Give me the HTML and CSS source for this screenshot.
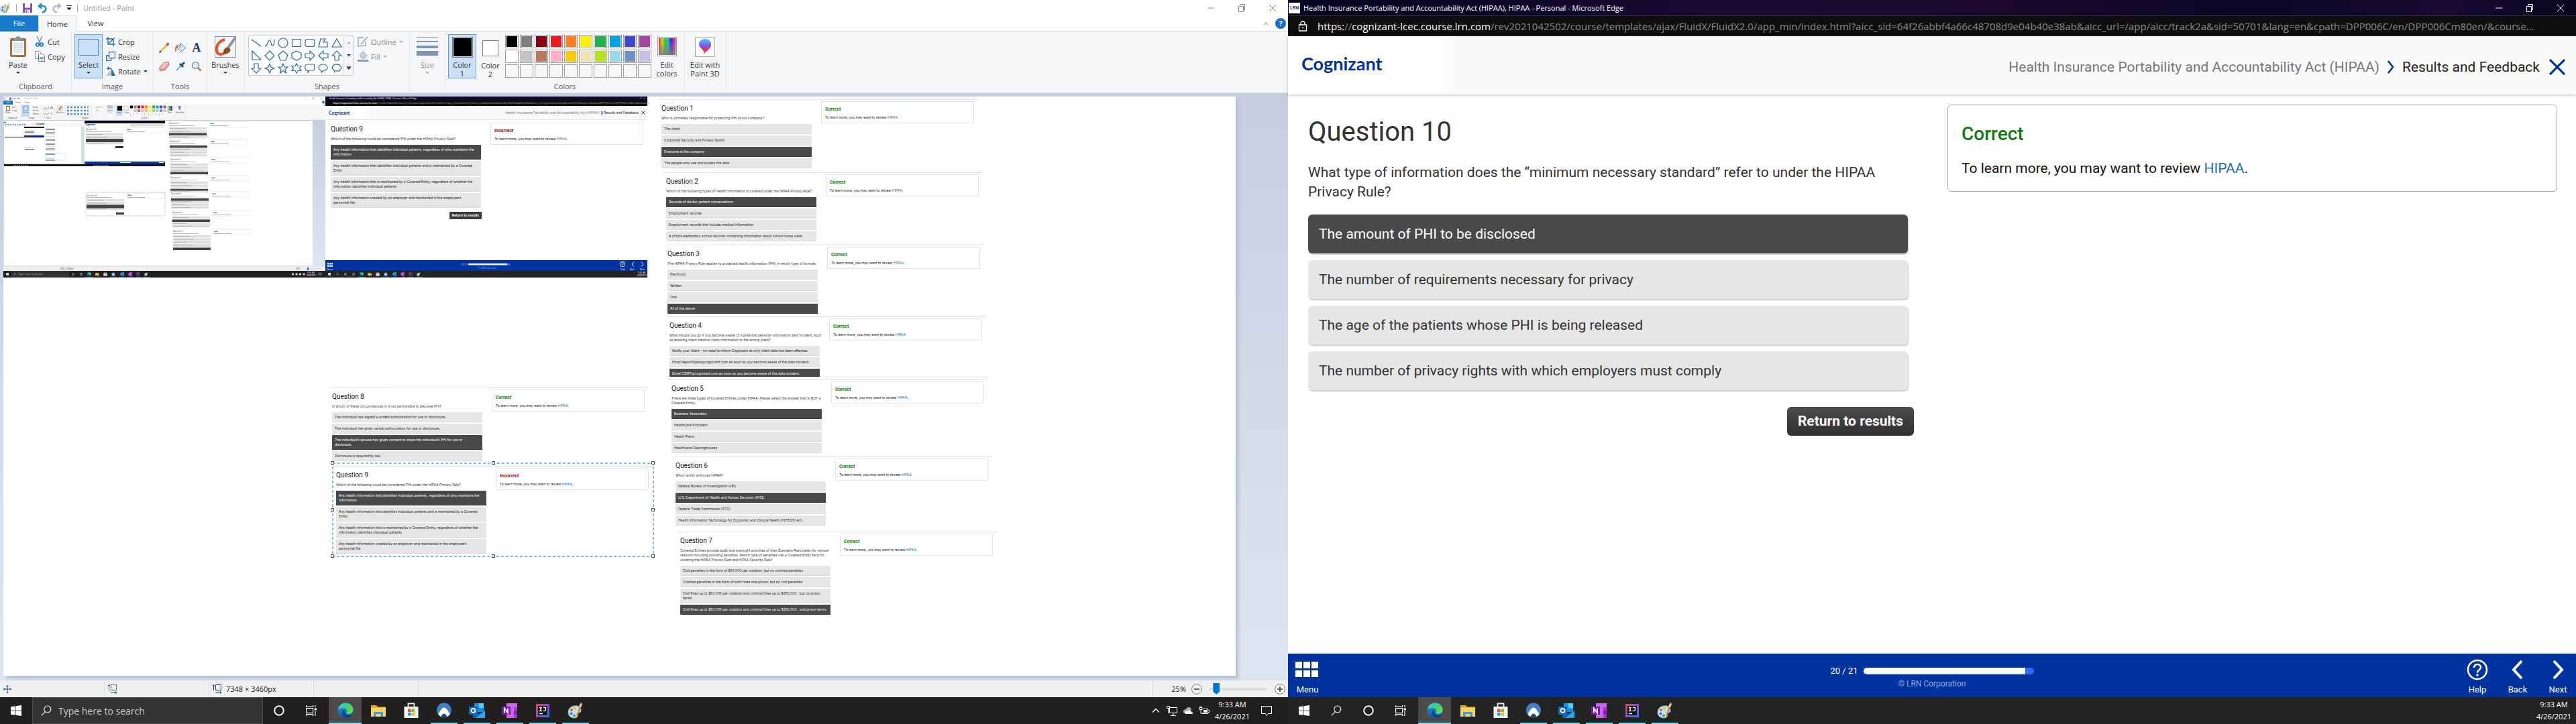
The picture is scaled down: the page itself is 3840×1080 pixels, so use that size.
FILE: index.html
```html
<!DOCTYPE html>
<html lang="en">
<head>
<meta charset="utf-8">
<meta name="viewport" content="width=device-width, initial-scale=1">
<title>Untitled - Paint</title>
<link rel="stylesheet" href="styles.css">
</head>
<body>
<svg class="defs" aria-hidden="true">
  <defs>
    <linearGradient id="edgeA" x1="0" y1="0" x2="1" y2="1"><stop offset="0" stop-color="#36c9f0"/><stop offset=".5" stop-color="#3fd06f"/><stop offset="1" stop-color="#7be04a"/></linearGradient>
    <linearGradient id="edgeB" x1="0" y1="0" x2="0" y2="1"><stop offset="0" stop-color="#1fa8e0"/><stop offset="1" stop-color="#0f4fa0"/></linearGradient>
    <linearGradient id="rainbow"><stop offset="0" stop-color="#e02020"/><stop offset=".2" stop-color="#e8e020"/><stop offset=".4" stop-color="#20d020"/><stop offset=".55" stop-color="#20c8e0"/><stop offset=".72" stop-color="#2020e0"/><stop offset=".88" stop-color="#d020d0"/><stop offset="1" stop-color="#e02060"/></linearGradient>
    <linearGradient id="fadeGray" x1="0" y1="0" x2="0" y2="1"><stop offset="0" stop-color="#808080" stop-opacity="0"/><stop offset="1" stop-color="#808080" stop-opacity=".9"/></linearGradient>
    <linearGradient id="pin" x1="0" y1="0" x2="0" y2="1"><stop offset="0" stop-color="#35d0f0"/><stop offset=".4" stop-color="#7a5cf0"/><stop offset=".7" stop-color="#e0305c"/><stop offset="1" stop-color="#f8b020"/></linearGradient>
    <linearGradient id="ws" x1="0" y1="0" x2="0" y2="1"><stop offset="0" stop-color="#c6cfe0"/><stop offset="1" stop-color="#dce6f3"/></linearGradient>
    <linearGradient id="ijg" x1="0" y1="0" x2="1" y2="1"><stop offset="0" stop-color="#e83a5f"/><stop offset=".5" stop-color="#8a4fd0"/><stop offset="1" stop-color="#1a7ff0"/></linearGradient>
  </defs>
  <symbol id="i-win" viewBox="0 0 16 16"><path fill="#fff" d="M0 2.3 6.6 1.4v6.3H0zM7.4 1.3 16 0v7.7H7.4zM0 8.5h6.6v6.2L0 13.8zM7.4 8.5H16V16l-8.6-1.2z"/></symbol>
  <symbol id="i-search" viewBox="0 0 16 16"><g fill="none" stroke="#e8e8e8" stroke-width="1.2"><circle cx="9.8" cy="6" r="5"/><path d="M6.2 9.8 .8 15.4"/></g></symbol>
  <symbol id="i-ring" viewBox="0 0 16 16"><circle cx="8" cy="8" r="6.8" fill="none" stroke="#f4f4f4" stroke-width="2"/></symbol>
  <symbol id="i-task" viewBox="0 0 16 16"><g fill="none" stroke="#f0f0f0" stroke-width="1.2"><path d="M.6 4.6h10v7H.6zM.6 0v2.4h10V0M.6 16v-2.400h10V16M14 0v3M14 9v7"/></g><path fill="#f0f0f0" d="M12.600 4.500H16v3h-3.400z"/></symbol>
  <symbol id="i-edge" viewBox="0 0 24 24"><circle cx="12" cy="12" r="11.500" fill="url(#edgeB)"/><path fill="url(#edgeA)" d="M1 10C2 4 7 .5 12 .5c7 0 11.500 5 11.500 10 0 4-3 6.500-7 6.500-3 0-4-1-3-2.200 1.400-1.800 1-5.800-3.500-6.300C6 8 2 9 1 10z"/><path fill="#0c3f86" d="M9 11c-3 4-1 10.500 5.500 11.200 3 .2 6-1.700 7.500-4.200-5 2.500-11.500.5-11.500-4 0-1.500.5-2.500-1.500-3z"/></symbol>
  <symbol id="i-folder" viewBox="0 0 24 24"><path fill="#e2a41c" d="M1 4h8l2 2.500H23V10H1z"/><path fill="#ffd45e" d="M1 7.500h22V21H1z"/><path fill="#3c9be0" d="M5 14h14v7h-3.500v-4h-7v4H5z"/></symbol>
  <symbol id="i-store" viewBox="0 0 24 24"><path fill="none" stroke="#e8e8e8" stroke-width="1.800" d="M7.500 6V1.500h9V6"/><path fill="#f4f4f4" d="M1.500 6h21v17h-21z"/><path fill="#e8502a" d="M7 9.500h4.500V14H7z"/><path fill="#7fb92a" d="M12.500 9.500H17V14h-4.500z"/><path fill="#1a9be8" d="M7 15h4.500v4.500H7z"/><path fill="#fbbc12" d="M12.500 15H17v4.500h-4.500z"/></symbol>
  <symbol id="i-nord" viewBox="0 0 24 24"><circle cx="12" cy="11.500" r="11" fill="#3f7fc8"/><path fill="#fff" d="M3.500 17.500C5 14 8.500 7.500 12 7.500s7 6.500 8.500 10L17 21c-2-3-3.500-4.500-5-4.500S9 18 7 21z"/><path fill="#22406f" d="m8 21 2.500-4.500 1.500 1.500 1.500-1.500L16 21c-2 1.800-6 1.800-8 0z"/></symbol>
  <symbol id="i-outlook" viewBox="0 0 24 24"><path fill="#1a8fe0" d="M8 1h14v13H8z"/><path fill="#50d0f8" d="M15 1h7v7h-7z"/><path fill="#1060b8" d="m6 12 9 5 9-5v11H6z"/><path fill="#2aa8ec" d="m24 12-14 11H22.500L24 22z"/><path fill="#0f6cc4" d="M0 6h13v12H0z"/><circle cx="6.500" cy="12" r="3" fill="none" stroke="#fff" stroke-width="1.800"/></symbol>
  <symbol id="i-onenote" viewBox="0 0 24 24"><path fill="#ca64ea" d="M7 1h16v22H7z"/><path fill="#a33ac8" d="M18 7h5v16h-5z"/><path fill="#8a22b0" d="M18 12h5v6h-5z"/><path fill="#7719aa" d="M0 6h13v12H0z"/><path fill="none" stroke="#fff" stroke-width="1.800" d="M4 15.500V8.500l5 7V8.500"/></symbol>
  <symbol id="i-ij" viewBox="0 0 24 24"><path fill="url(#ijg)" d="M2 2h20v20H2z"/><path fill="#111" d="M5 5h14v14H5z"/><path fill="none" stroke="#fff" stroke-width="1.400" d="M7 7.500h4M9 7.500v5M7 12.500h4M13 7.500h3.500v3.500c0 2-3 2-3.500.8M7 16.500h5"/></symbol>
  <symbol id="i-paint" viewBox="0 0 24 24"><path fill="#bfe0ee" stroke="#7fb2cc" d="M10 5c6-1 10 2 10 7 0 3-2 3-4 3s-2 2-1 4-1 4-5 4C4 23 1 19 1 14.500 1 9 5 5.800 10 5z"/><circle cx="6" cy="11" r="2" fill="#e85030"/><circle cx="11" cy="8.500" r="2" fill="#f0b828"/><circle cx="5.500" cy="16.500" r="2" fill="#3a70d8"/><circle cx="10" cy="19.500" r="2" fill="#40b050"/><path fill="#d8802a" d="m20 7-5 14-2 2 .5-3L17 7z"/><path fill="#e8c89a" d="M17 7c0-3 2-6 4-7 1 2 1 5-1 7z"/></symbol>
  <symbol id="i-move" viewBox="0 0 12 12"><path fill="none" stroke="#1f3f6f" d="M6 0v12M0 6h12M4.500 2 6 .5 7.500 2M4.500 10 6 11.500 7.500 10M2 4.500.5 6 2 7.500M10 4.500 11.500 6 10 7.500"/></symbol>
  <g id="mq">
    <path d="M1 .8h119" stroke="#e4e4e4" stroke-width=".5"/>
    <path d="M1 7.500h38" stroke="#999" stroke-width=".7"/>
    <path d="M1 11.600h56M1 15.900h56M1 20.200h56M1 24.500h56" stroke="#dedede" stroke-width="3.500"/>
    <path d="M2 11.600h24M2 15.900h30M2 20.200h20M2 24.500h28" stroke="#888" stroke-width=".5"/>
    <rect x="60.500" y="1.500" width="57" height="8" fill="#fff" stroke="#e4e4e4" stroke-width=".5"/>
    <path d="M62 4.200h6" stroke="#3c9a3c" stroke-width="1.200"/><path d="M62 7.600h22" stroke="#777" stroke-width=".6"/><path d="M84 7.600h4.500" stroke="#3a8ac0" stroke-width=".7"/>
  </g>
  <g id="apps">
    <use href="#i-edge" x="7" y="0" width="6" height="6"/><use href="#i-folder" x="19" width="6" height="6"/><use href="#i-store" x="31" width="6" height="6"/><use href="#i-nord" x="43" width="6" height="6"/><use href="#i-outlook" x="56" width="6" height="6"/><use href="#i-onenote" x="68" width="6" height="6"/><use href="#i-ij" x="80" width="6" height="6"/><use href="#i-paint" x="92" width="6" height="6"/>
    <path d="M4 7.700h12M41 7.700h10M54 7.700h10M66 7.700h10M78 7.700h10M90 7.700h10" stroke="#76d9f5" stroke-width=".6"/>
  </g>
</svg>

<div class="screens">
<!-- Left monitor: Paint -->
<section class="screen paint">
  <header class="p-title">
    <svg class="i16" viewBox="0 0 24 24"><use href="#i-paint"/></svg>
    <span class="bar"></span>
    <button class="qa" aria-label="Save"><svg class="i16" viewBox="0 0 16 16"><path fill="#7f5aa8" d="M1 1h14v14H1z"/><path fill="#fff" d="M4 1h8v6.500H4z"/><path fill="#e8e0f0" d="M4 10.500h8V15H4z"/><path fill="#7f5aa8" d="M5.500 11.500h2V15h-2z"/></svg></button>
    <button class="qa" aria-label="Undo"><svg class="i16" viewBox="0 0 16 16"><path fill="none" stroke="#1f8fe0" stroke-width="2.600" d="M4 5h5c6 0 6 8-1 9.500"/><path fill="#1f8fe0" d="M7 0v10L.8 5z"/></svg></button>
    <button class="qa" aria-label="Redo"><svg class="i16" viewBox="0 0 16 16"><path fill="none" stroke="#b4bccb" stroke-width="2.600" d="M12 5H7c-6 0-6 8 1 9.500"/><path fill="#b4bccb" d="M9 0v10l6.200-5z"/></svg></button>
    <svg class="i8" viewBox="0 0 8 8"><path d="M0 .5h8" stroke="#333"/><path d="M.5 3.500h7L4 7z"/></svg>
    <span class="bar"></span>
    <span class="name">Untitled - Paint</span>
    <span class="ctl"><button aria-label="Minimize"><svg class="i12" viewBox="0 0 12 12"><path d="M1 6h10" stroke="#888"/></svg></button><button aria-label="Restore"><svg class="i12" viewBox="0 0 12 12"><path fill="none" stroke="#888" d="M1.500 3.500h7v8h-7zM3.500 3V.5h7v8H9"/></svg></button><button aria-label="Close"><svg class="i12" viewBox="0 0 12 12"><path d="m1 1 10 10M11 1 1 11" stroke="#888"/></svg></button></span>
  </header>
  <nav class="p-tabs">
    <button class="file">File</button><button class="on">Home</button><button>View</button>
    <span class="tabs-end"><svg class="i8" viewBox="0 0 8 8"><path fill="none" stroke="#888" d="M1 6.500 4 2.500l3 4"/></svg><button class="help" aria-label="Help">?</button></span>
  </nav>
  <div class="ribbon">
    <section class="grp g-clip"><div class="row">
      <button class="big">
        <svg class="i32" viewBox="0 0 32 32"><rect x="4" y="3" width="24" height="28" rx="2" fill="#a9713d"/><path fill="#f6f8fa" d="M7 7h18v21H7z"/><path stroke="#9fb3c4" d="M9 11.500h14M9 14.500h14M9 17.500h14M9 20.500h14M9 23.500h14"/><path fill="#8b9299" d="M10 3c3 0 3-3 6-3s3 3 6 3v4H10z"/></svg>
        <span>Paste</span><i class="dd"></i></button>
      <div class="stack two"><button><svg class="i16" viewBox="0 0 16 16"><path d="m4 0 5 10M12 0 7 10" stroke="#8a97a5" stroke-width="1.600"/><g fill="none" stroke="#1f7fd0" stroke-width="1.800"><circle cx="5" cy="12.500" r="2.300"/><circle cx="11" cy="12.500" r="2.300"/></g></svg>Cut</button><button><svg class="i16" viewBox="0 0 16 16"><path fill="#fff" stroke="#8a95a0" d="M1.500.5h6l2 2v9h-8z"/><path fill="#fff" stroke="#6a7580" d="M6.500 4.500h6l3 3v8h-9z"/><path stroke="#4a90d0" d="M8 9.500h6M8 11.500h6M8 13.500h6"/></svg>Copy</button></div>
    </div><h2>Clipboard</h2></section>
    <section class="grp g-image"><div class="row">
      <button class="big sel"><svg class="i32" viewBox="0 0 32 32"><rect x="1.500" y="4.500" width="29" height="24" fill="none" stroke="#1f5f9f" stroke-dasharray="2 1"/></svg><span>Select</span><i class="dd"></i></button>
      <div class="stack"><button><svg class="i14" viewBox="0 0 14 14"><path fill="none" stroke="#1f6fb0" stroke-width="1.300" d="M3 0v11h11M0 3h11v11M3 11 13 1"/></svg>Crop</button><button><svg class="i14" viewBox="0 0 14 14"><path fill="none" stroke="#1f6fb0" stroke-width="1.300" d="M4.500.7h9v9h-9zM4.500 6H.7v7.300h7V10"/></svg>Resize</button><button><svg class="i14" viewBox="0 0 14 14"><path fill="#bcc4cc" d="M7 5v9H0z"/><path fill="#1f6fb0" d="M8 2v12h6zM1 3l3-3v2h3v2H4v2z"/></svg>Rotate<i class="dd"></i></button></div>
    </div><h2>Image</h2></section>
    <section class="grp g-tools"><div class="tools">
      <button aria-label="Pencil"><svg class="i16" viewBox="0 0 16 16"><path d="M2 14 12 4" stroke="#e8c050" stroke-width="3"/><path d="m11.500 4.500 3-3" stroke="#c85048" stroke-width="3.200"/><path fill="#444" d="m0 16 1.500-4 2.500 2.500z"/></svg></button>
      <button aria-label="Fill with color"><svg class="i16" viewBox="0 0 16 16"><path fill="#e86a30" d="M0 13c0-6 1-9 4-9v3c-2 1-2 4-2 7z"/><path fill="#cfe4f4" stroke="#5a8ab0" d="m9 2 6.500 6.500-6 6-6.500-6.500z"/><path d="M8 1v7" stroke="#777"/></svg></button>
      <button class="letter" aria-label="Text">A</button>
      <button aria-label="Eraser"><svg class="i16" viewBox="0 0 16 16"><path fill="#e89a96" stroke="#b8605c" d="m7 2.500 7-1 1 4-6 8-7 1-1.500-4z"/><path fill="#f6c4c0" d="m7 3 7-1-5.500 7.500L1.500 11z"/></svg></button>
      <button aria-label="Color picker"><svg class="i16" viewBox="0 0 16 16"><path d="m2 14 7-7" stroke="#8ab4d8" stroke-width="2.400"/><path d="m7 4 5 5M10 6l4-4" stroke="#1f4f80" stroke-width="3"/></svg></button>
      <button aria-label="Magnifier"><svg class="i16" viewBox="0 0 16 16"><circle cx="6.500" cy="6.500" r="5" fill="#dcebf6" stroke="#8a97a5" stroke-width="1.500"/><path d="m10.500 10.500 4 4" stroke="#a97a4a" stroke-width="2.600"/></svg></button>
    </div><h2>Tools</h2></section>
    <section class="grp g-brush"><div class="row">
      <button class="big"><svg class="i32" viewBox="0 0 32 32"><path fill="#f2f6f8" stroke="#8a8f94" d="M.5.5h31v31H.5z"/><path fill="none" stroke="#e8582a" stroke-width="4" d="M15 5C4 8 1 17 4 25c4 4 10 1 14-2"/><path d="m31 2-11 15" stroke="#8d949c" stroke-width="4"/><path fill="#8a4a22" d="M14 20c3-5 7-4 9-1s-2 8-11 8c2-2 0-4 2-7z"/></svg><span>Brushes</span><i class="dd"></i></button>
    </div></section>
    <section class="grp g-shapes"><div class="row">
      <div class="gallery">
        <div class="shapes">
          <button aria-label="Line"><svg viewBox="0 0 16 16"><path d="m1 3 14 10"/></svg></button><button aria-label="Curve"><svg viewBox="0 0 16 16"><path d="M1 13c4 0 4-9 7-9s1 8 4 8 3-5 3-9"/></svg></button><button aria-label="Oval"><svg viewBox="0 0 16 16"><circle cx="8" cy="8" r="7"/></svg></button><button aria-label="Rectangle"><svg viewBox="0 0 16 16"><path d="M1.500 2.500h13v11h-13z"/></svg></button><button aria-label="Rounded rectangle"><svg viewBox="0 0 16 16"><rect x="1" y="2.500" width="14" height="11" rx="3"/></svg></button><button aria-label="Polygon"><svg viewBox="0 0 16 16"><path d="M1 14 4 2h7l-3 5h6v7z"/></svg></button><button aria-label="Triangle"><svg viewBox="0 0 16 16"><path d="m8 2 7 12H1z"/></svg></button>
          <button aria-label="Right triangle"><svg viewBox="0 0 16 16"><path d="M2 1v13h13z"/></svg></button><button aria-label="Diamond"><svg viewBox="0 0 16 16"><path d="m8 1 7 7-7 7-7-7z"/></svg></button><button aria-label="Pentagon"><svg viewBox="0 0 16 16"><path d="m8 1 7 6-3 8H4L1 7z"/></svg></button><button aria-label="Hexagon"><svg viewBox="0 0 16 16"><path d="m8 1 7 3.500v7L8 15l-7-3.500v-7z"/></svg></button><button aria-label="Right arrow"><svg viewBox="0 0 16 16"><path d="M1 5h7V1l7 7-7 7v-4H1z"/></svg></button><button aria-label="Left arrow"><svg viewBox="0 0 16 16"><path d="M15 5H8V1L1 8l7 7v-4h7z"/></svg></button><button aria-label="Up arrow"><svg viewBox="0 0 16 16"><path d="M5 15V8H1l7-7 7 7h-4v7z"/></svg></button>
          <button aria-label="Down arrow"><svg viewBox="0 0 16 16"><path d="M5 1v7H1l7 7 7-7h-4V1z"/></svg></button><button aria-label="Four-point star"><svg viewBox="0 0 16 16"><path d="m8 1 2 5 5 2-5 2-2 5-2-5-5-2 5-2z"/></svg></button><button aria-label="Five-point star"><svg viewBox="0 0 16 16"><path d="m8 1 2 5h5l-4 3.500L12.500 15 8 11.500 3.500 15 5 9.500 1 6h5z"/></svg></button><button aria-label="Six-point star"><svg viewBox="0 0 16 16"><path d="m8 1 2 3.500h5L12.500 8l2.500 3.500h-5L8 15l-2-3.500H1L3.500 8 1 4.500h5z"/></svg></button><button aria-label="Rounded callout"><svg viewBox="0 0 16 16"><path d="M3 2h10c3 0 2 9 0 9H7l-2 3v-3H3C0 11 0 2 3 2z"/></svg></button><button aria-label="Oval callout"><svg viewBox="0 0 16 16"><path d="M5 14v-3C-2 9 1 2 8 2s9 9 0 9.500z"/></svg></button><button aria-label="Cloud callout"><svg viewBox="0 0 16 16"><path d="M4 3c2-2 4-1 5-.5 3-1 4 1 4 2 3 1 2 4 0 5 0 3-3 3-5 2-3 1-5 0-5-2-3-1-2-5 1-6.500zM4 14l1-2"/></svg></button>
        </div>
        <div class="gal-scroll"><i class="dd up"></i><i class="dd"></i><i class="dd more"></i></div>
      </div>
      <div class="stack two off"><button><svg class="i16" viewBox="0 0 16 16"><path fill="none" stroke="#8aa0b8" stroke-width="1.300" d="M9 2H1v13l11-1V8M5 12 15 1"/></svg>Outline<i class="dd"></i></button><button><svg class="i16" viewBox="0 0 16 16"><path fill="#c8d2dc" stroke="#8aa0b8" d="m8 1 6 6-5 5-6-5z"/><path fill="#8a9bb0" d="M0 13h16v3H0z"/></svg>Fill<i class="dd"></i></button></div>
    </div><h2>Shapes</h2></section>
    <section class="grp g-size"><div class="row">
      <button class="big off"><svg class="i32" viewBox="0 0 32 32"><path fill="#7f93b4" d="M0 1h32v1H0zM0 7h32v2H0zM0 14h32v4H0zM0 22h32v7H0z"/></svg><span>Size</span><i class="dd"></i></button>
    </div></section>
    <section class="grp g-colors"><div class="row">
      <button class="col sel"><span class="well black"></span>Color<br>1</button>
      <button class="col"><span class="well white"></span>Color<br>2</button>
      <div class="palette">
        <button style="background:#000"></button><button style="background:#7f7f7f"></button><button style="background:#880015"></button><button style="background:#ed1c24"></button><button style="background:#ff7f27"></button><button style="background:#fff200"></button><button style="background:#22b14c"></button><button style="background:#00a2e8"></button><button style="background:#3f48cc"></button><button style="background:#a349a4"></button>
        <button style="background:#fff"></button><button style="background:#c3c3c3"></button><button style="background:#b97a57"></button><button style="background:#ffaec9"></button><button style="background:#ffc90e"></button><button style="background:#efe4b0"></button><button style="background:#b5e61d"></button><button style="background:#99d9ea"></button><button style="background:#7092be"></button><button style="background:#c8bfe7"></button>
        <button class="none"></button><button class="none"></button><button class="none"></button><button class="none"></button><button class="none"></button><button class="none"></button><button class="none"></button><button class="none"></button><button class="none"></button><button class="none"></button>
      </div>
      <button class="big"><svg class="i32" viewBox="0 0 32 32"><path fill="#fff" stroke="#999" d="M2.500 1.500h28v28h-28z"/><path fill="url(#rainbow)" d="M4 3h25v25H4z"/><path fill="url(#fadeGray)" d="M4 3h25v25H4z"/></svg><span>Edit<br>colors</span></button>
    </div><h2>Colors</h2></section>
    <section class="grp g-3d"><div class="row">
      <button class="big"><svg class="i32" viewBox="0 0 32 32"><path fill="#fbfbfb" stroke="#aaa" d="M1.500 1.500h29v29h-29z"/><path fill="url(#pin)" d="M16 4c6 0 9 4 9 9 0 6-7 8-11 15 1-4 0-6-3-9s-4-5-4-7c0-5 4-8 9-8z"/></svg><span>Edit with<br>Paint 3D</span></button>
    </div></section>
  </div>

  <div class="workspace">
    <div class="canvas">
      <div class="shot">
        <svg class="shot-paint" viewBox="0 0 480 270">
          <path fill="#fff" d="M0 0h480v270H0z"/>
          <use href="#i-paint" x="0" y="1" width="4" height="4"/><path fill="#7f5aa8" d="M9 1.500h3v3.500H9z"/><path d="M15 3h3M21 3h3" stroke="#1f8fe0" stroke-width="1.500"/>
          <text x="31" y="4" class="t3 dim">Untitled - Paint</text>
          <path d="M450 3h3M461 2h2v2h-2zM472 2l3 3m0-3-3 3" stroke="#999" stroke-width=".5" fill="none"/>
          <path fill="#1979ca" d="M0 6h14v6H0z"/><text x="5" y="10" class="t3 inv">File</text><text x="18" y="10" class="t3">Home</text><text x="32" y="10" class="t3">View</text>
          <circle cx="477" cy="8.500" r="2" fill="#1979ca"/>
          <path fill="#f5f6f7" d="M0 12h480v22H0z"/><path d="M0 34.500h480M27 12v22M57 12v22M77 12v22M91 12v22M153 12v22M166 12v22M255 12v22M271 12v22" stroke="#dcdfe3" stroke-width=".5"/>
          <path fill="#a9713d" d="M4 14h6v8H4z"/><path fill="#fff" d="M5 15.500h4v5H5z"/><text x="3" y="25" class="t3">Paste</text><text x="13" y="17" class="t3">Cut</text><text x="13" y="22" class="t3">Copy</text>
          <path fill="#c9e0f7" stroke="#62a2e4" stroke-width=".5" d="M28 13h10v16H28z"/><path fill="none" stroke="#1f5f9f" stroke-width=".5" d="M30 15h7v6h-7z"/><text x="29" y="25" class="t3">Select</text><text x="44" y="17" class="t3">Crop</text><text x="44" y="22" class="t3">Resize</text><text x="44" y="27" class="t3">Rotate</text>
          <path d="m60 19 3-3M60 27l3-2" stroke="#c86a4a"/><path d="m65 19 3-3M65 27l3-3" stroke="#4a80b0"/><path d="m70 19 2-4 2 4M70 24l3 3" stroke="#345" fill="none" stroke-width=".7"/>
          <path fill="#f2f6f8" stroke="#999" stroke-width=".5" d="M81 14h7v7h-7z"/><path d="m83 20 4-5" stroke="#e8582a" stroke-width="2"/><text x="79" y="25" class="t3">Brushes</text>
          <path fill="#fff" stroke="#ccd" stroke-width=".5" d="M93 13.500h38v15H93z"/><path d="M95 16h32M95 21h32M95 26h32" stroke="#5a8fc0" stroke-width="2.500" stroke-dasharray="3 2"/>
          <text x="138" y="17" class="t3 dim">Outline</text><text x="138" y="22" class="t3 dim">Fill</text>
          <path d="M155 14h8M155 16h8M155 18.500h8M155 21h8" stroke="#7f93b4"/><text x="156" y="25" class="t3 dim">Size</text>
          <path fill="#c9e0f7" d="M168 13h10v16h-10z"/><path d="M170 14h7v7h-7z"/><path fill="#fff" stroke="#888" stroke-width=".5" d="M180 15h6v5h-6z"/><text x="169" y="25" class="t3">Color</text><text x="180" y="25" class="t3">Color</text>
          <g stroke-width="4"><path d="M189 15.500h4" stroke="#000"/><path d="M194.500 15.500h4" stroke="#7f7f7f"/><path d="M200 15.500h4" stroke="#880015"/><path d="M205.500 15.500h4" stroke="#ed1c24"/><path d="M211 15.500h4" stroke="#ff7f27"/><path d="M216.500 15.500h4" stroke="#fff200"/><path d="M222 15.500h4" stroke="#22b14c"/><path d="M227.500 15.500h4" stroke="#00a2e8"/><path d="M233 15.500h4" stroke="#3f48cc"/><path d="M238.500 15.500h4" stroke="#a349a4"/>
          <path d="M194.500 21h4" stroke="#c3c3c3"/><path d="M200 21h4" stroke="#b97a57"/><path d="M205.500 21h4" stroke="#ffaec9"/><path d="M211 21h4" stroke="#ffc90e"/><path d="M216.500 21h4" stroke="#efe4b0"/><path d="M222 21h4" stroke="#b5e61d"/><path d="M227.500 21h4" stroke="#99d9ea"/><path d="M233 21h4" stroke="#7092be"/><path d="M238.500 21h4" stroke="#c8bfe7"/></g>
          <path d="M189 26.500h54" stroke="#999" stroke-width="4" stroke-dasharray=".5 4.900"/><path fill="url(#rainbow)" d="M245 14h7v7h-7z"/><text x="245" y="25" class="t3">Edit</text><path fill="url(#pin)" d="M260 14h5l-2 7z"/><text x="257" y="25" class="t3">Edit with</text>
          <text x="7" y="33" class="t3">Clipboard</text><text x="38" y="33" class="t3">Image</text><text x="63" y="33" class="t3">Tools</text><text x="117" y="33" class="t3">Shapes</text><text x="206" y="33" class="t3">Colors</text>
          <path fill="url(#ws)" d="M0 35h480v219H0z"/><path fill="#fff" d="M1 36h460v216H1z"/>
          <!-- the screenshot inside the screenshot -->
          <path fill="#f5f6f7" d="M1 39h120v6H1z"/><path fill="#1979ca" d="M1 38h3v1.500H1z"/><path d="M3 42h30" stroke="#8a98a8" stroke-width="2" stroke-dasharray="2 1.500"/><path d="M48 41h14" stroke="#e07030" stroke-width="2" stroke-dasharray="1.400 .6"/><path d="M54 41h6" stroke="#40a0a0" stroke-width="2"/>
          <path fill="#d3dcea" d="M1 45h120v55H1z"/><path fill="#fff" d="M1 45h115v54H1z"/>
          <path d="M2 60.500h29M31 60.500h29" stroke="#101020" stroke-width="1"/><path fill="#0a0820" d="M31 45h30v2H31z"/><path fill="#0033a0" d="M31 58h30v2H31z"/>
          <path d="M32 51h14M32 53h14M32 55h14M32 76h14M32 79h14M63 48h14M63 50h14M63 56h14M63 60h14M63 64h14M63 71h14M63 74h14M63 80h14M63 86h14M63 92h14" stroke="#ccc"/>
          <path d="M32 53h14M32 79h14M63 49h14M63 54h14M63 65h14M63 71h14M63 78h14M63 86h14M63 95h14" stroke="#444"/>
          <path fill="none" stroke="#8ab8e0" stroke-width=".4" d="M63 85h30v10H63z"/>
          <path fill="#151313" d="M1 101h240v3H1z"/><path d="M14 102.500h24M134 102.500h24" stroke="#7aa0b8" stroke-dasharray="2 1"/>
          <path fill="#0a0820" d="M121 36h120v4H121z"/><path fill="#fafafa" d="M121 40h120v5H121z"/><text x="122" y="43" class="t3 brand">Cognizant</text><path d="M190 42.500h48" stroke="#666" stroke-width=".8"/>
          <use href="#mq" x="122" y="45"/><text x="123" y="50" class="t3">Question 8</text><path fill="#444" d="M123 63h56v5h-56z"/><path fill="#333" d="M167 74h12v3h-12z"/>
          <path fill="#0033a0" d="M121 97h120v4H121z"/><path d="M174 98.500h16M232 98.500h7" stroke="#fff"/>
          <use href="#mq" x="246" y="36"/><text x="247" y="41" class="t3">Question 1</text><path fill="#444" d="M247 54.500h56v3.500h-56z"/>
          <use href="#mq" x="247" y="63"/><text x="248" y="68" class="t3">Question 2</text><path fill="#444" d="M248 73h56v3.500h-56z"/>
          <use href="#mq" x="248" y="90"/><text x="249" y="95" class="t3">Question 3</text><path fill="#444" d="M249 112.500h56v3.500h-56z"/>
          <use href="#mq" x="248" y="117"/><text x="249" y="122" class="t3">Question 4</text><path fill="#444" d="M249 138h56v2.500h-56z"/>
          <use href="#mq" x="249" y="141"/><text x="250" y="146" class="t3">Question 5</text><path fill="#444" d="M250 152h56v3.500h-56z"/>
          <use href="#mq" x="251" y="169"/><text x="252" y="174" class="t3">Question 6</text><path fill="#444" d="M252 183.500h56v3.500h-56z"/>
          <use href="#mq" x="252" y="197"/><text x="253" y="202" class="t3">Question 7</text><path fill="#dedede" d="M253 222h56v4h-56z"/><path fill="#444" d="M253 225.500h56v3.500h-56z"/>
          <use href="#mq" x="123" y="143"/><text x="124" y="149" class="t3">Question 8</text><path fill="#444" d="M124 161.500h56v5h-56z"/><path fill="#333" d="M168 173h12v3h-12z"/>
          <path fill="none" stroke="#2a8ad4" stroke-width=".4" stroke-dasharray="2 1" d="M123 143h118v35H123z"/>
          <path fill="#f0f0f0" d="M0 254h480v6H0z"/><text x="84" y="258" class="t3">7348 × 3460px</text><text x="436" y="258" class="t3">25%</text><path d="M451 257h22" stroke="#bbb" stroke-width=".6"/><path fill="#0078d7" d="M453 255h2v4h-2z"/>
          <path fill="#22201f" d="M0 260h480v10H0z"/><path fill="#333" d="M12 260h86v10H12z"/><use href="#i-win" x="4" y="263" width="4" height="4"/><use href="#i-search" x="15" y="263" width="4" height="4"/><text x="22" y="266" class="t4 soft">Type here to search</text><use href="#i-ring" x="102" y="263" width="4" height="4"/><use href="#i-task" x="114" y="263" width="4" height="4"/><use href="#apps" x="118" y="262"/>
          <path d="M430 265h20" stroke="#ddd" stroke-width="2.500" stroke-dasharray="3 2.500"/><text x="453" y="264" class="t3 inv">9:32 AM</text><text x="452" y="268" class="t3 inv">4/26/2021</text><path fill="none" stroke="#ddd" stroke-width=".5" d="M470 263h4v3h-4z"/>
        </svg>
        <div class="shot-edge">
          <div class="s-title"><span>Health Insurance Portability and Accountability Act (HIPAA), HIPAA - Personal - Microsoft Edge</span><span>–&nbsp; ❐&nbsp; ✕</span></div>
          <div class="s-url"><b>https://cognizant-lcec.course.lrn.com</b>/rev2021042502/course/templates/ajax/FluidX/FluidX2.0/app_min/index.html?aicc_sid=64f26abbf4a66c48708d9e04b40e38ab&amp;aicc_url=/app/aicc/track2a&amp;sid=50701&amp;lang=en&amp;cpath=DPP006C/en/DPP006Cm80en/&amp;course...</div>
          <div class="s-head"><span class="s-logo">Cognizant</span><span class="s-crumb">Health Insurance Portability and Accountability Act (HIPAA) <b>❯</b> <em>Results and Feedback</em></span><svg class="s-x" viewBox="0 0 12 12"><path d="m1 1 10 10M11 1 1 11" stroke="#0033a0" stroke-width="1.800"/></svg></div>
          <div class="q-body roomy">
            <div class="q-main"><h3>Question 9</h3><p>Which of the following could be considered PHI under the HIPAA Privacy Rule?</p>
              <ul><li class="on">Any health information that identifies individual patients, regardless of who maintains the<br>information</li><li>Any health information that identifies individual patients and is maintained by a Covered<br>Entity</li><li>Any health information that is maintained by a Covered Entity, regardless of whether the<br>information identifies individual patients</li><li>Any health information created by an employer and maintained in the employee’s<br>personnel file</li></ul>
              <span class="s-return">Return to results</span></div>
            <div class="q-fb"><h4 class="bad">Incorrect</h4><p>To learn more, you may want to review <a href="#">HIPAA</a>.</p></div>
          </div>
          <svg class="s-foot" viewBox="0 0 480 26">
            <path fill="#0033a0" d="M0 0h480v16H0z"/><path fill="#fff" d="M3 4h2v2.500H3zM6 4h2v2.500H6zM9 4h2v2.500H9zM3 7.500h2V10H3zM6 7.500h2V10H6zM9 7.500h2V10H9z"/><text x="3" y="14.500" class="t3 inv">Menu</text>
            <text x="202" y="7.500" class="t3 inv">19 / 21</text><path d="M214 6.300h60" stroke="#fff" stroke-width="2.500" stroke-linecap="round"/><path d="M271 6.300h5" stroke="#2f6bff" stroke-width="2.500"/><text x="228" y="12.500" class="t3 soft">© LRN Corporation</text>
            <g fill="none" stroke="#fff"><circle cx="443" cy="6" r="3.700" stroke-width=".9"/><path stroke-width=".8" d="M441.800 5c0-2 2.800-1.500 2.400.2-.4.800-1.200.8-1.200 1.800"/><path d="m460 2.500-3 3.500 3 3.500M471 2.500l3 3.500-3 3.500"/></g><text x="440" y="14.500" class="t3 inv">Help</text><text x="454" y="14.500" class="t3 inv">Back</text><text x="469" y="14.500" class="t3 inv">Next</text>
            <path fill="#222423" d="M0 16h480v10H0z"/><use href="#i-win" x="4" y="19" width="4" height="4"/><use href="#i-search" x="16" y="19" width="4" height="4"/><use href="#i-ring" x="28" y="19" width="4" height="4"/><use href="#i-task" x="40" y="19" width="4" height="4"/><use href="#apps" x="44" y="18"/><text x="466" y="20" class="t3 inv">9:32 AM</text><text x="465" y="24" class="t3 inv">4/26/2021</text>
          </svg>
        </div>
      </div>

      <article class="quiz q1"><div class="q-body"><div class="q-main"><h3>Question 1</h3><p>Who is ultimately responsible for protecting PHI at our company?</p><ul><li>The client</li><li>Corporate Security and Privacy teams</li><li class="on">Everyone at the company</li><li>The people who use and access the data</li></ul></div><div class="q-fb"><h4>Correct</h4><p>To learn more, you may want to review <a href="#">HIPAA</a>.</p></div></div></article>
      <article class="quiz q2"><div class="q-body"><div class="q-main"><h3>Question 2</h3><p>Which of the following types of health information is covered under the HIPAA Privacy Rule?</p><ul><li class="on">Records of doctor–patient conversations</li><li>Employment records</li><li>Employment records that include medical information</li><li>A child’s elementary school records containing information about school nurse visits</li></ul></div><div class="q-fb"><h4>Correct</h4><p>To learn more, you may want to review <a href="#">HIPAA</a>.</p></div></div></article>
      <article class="quiz q3"><div class="q-body"><div class="q-main"><h3>Question 3</h3><p>The HIPAA Privacy Rule applies to protected health information (PHI) in which type of formats:</p><ul><li>Electronic</li><li>Written</li><li>Oral</li><li class="on">All of the above</li></ul></div><div class="q-fb"><h4>Correct</h4><p>To learn more, you may want to review <a href="#">HIPAA</a>.</p></div></div></article>
      <article class="quiz q4"><div class="q-body"><div class="q-main"><h3>Question 4</h3><p>What should you do if you become aware of a potential personal information data incident, such<br>as emailing client medical claim information to the wrong client?</p><ul><li>Notify your client – no need to inform Cognizant as only client data has been affected.</li><li>Email ReportSpam@cognizant.com as soon as you become aware of the data incident.</li><li class="on cut">Email CSIRT@cognizant.com as soon as you become aware of the data incident.</li></ul></div><div class="q-fb"><h4>Correct</h4><p>To learn more, you may want to review <a href="#">HIPAA</a>.</p></div></div></article>
      <article class="quiz q5"><div class="q-body"><div class="q-main"><h3>Question 5</h3><p>There are three types of Covered Entities under HIPAA. Please select the answer that is NOT a<br>Covered Entity.</p><ul><li class="on">Business Associates</li><li>Healthcare Providers</li><li>Health Plans</li><li>Healthcare Clearinghouses</li></ul></div><div class="q-fb"><h4>Correct</h4><p>To learn more, you may want to review <a href="#">HIPAA</a>.</p></div></div></article>
      <article class="quiz q6"><div class="q-body"><div class="q-main"><h3>Question 6</h3><p>Which entity enforces HIPAA?</p><ul><li>Federal Bureau of Investigation (FBI)</li><li class="on">U.S. Department of Health and Human Services (HHS)</li><li>Federal Trade Commission (FTC)</li><li>Health Information Technology for Economic and Clinical Health (HITECH) Act</li></ul></div><div class="q-fb"><h4>Correct</h4><p>To learn more, you may want to review <a href="#">HIPAA</a>.</p></div></div></article>
      <article class="quiz q7"><div class="q-body"><div class="q-main"><h3>Question 7</h3><p>Covered Entities provide audit and oversight activities of their Business Associates for various<br>reasons including avoiding penalties. Which type of penalties can a Covered Entity face for<br>violating the HIPAA Privacy Rule and HIPAA Security Rule?</p><ul><li>Civil penalties in the form of $50,000 per violation, but no criminal penalties</li><li>Criminal penalties in the form of both fines and prison, but no civil penalties</li><li>Civil fines up to $50,000 per violation and criminal fines up to $250,000 , but no prison<br>terms</li><li class="on">Civil fines up to $50,000 per violation and criminal fines up to $250,000 , and prison terms</li></ul></div><div class="q-fb"><h4>Correct</h4><p>To learn more, you may want to review <a href="#">HIPAA</a>.</p></div></div></article>
      <article class="quiz q8"><div class="q-body"><div class="q-main"><h3>Question 8</h3><p>In which of these circumstances is it not permissible to disclose PHI?</p><ul><li>The individual has signed a written authorization for use or disclosure.</li><li>The individual has given verbal authorization for use or disclosure.</li><li class="on">The individual’s spouse has given consent to share the individual’s PHI for use or<br>disclosure.</li><li>Disclosure is required by law.</li></ul></div><div class="q-fb"><h4>Correct</h4><p>To learn more, you may want to review <a href="#">HIPAA</a>.</p></div></div></article>
      <article class="quiz q9"><div class="q-body"><div class="q-main"><h3>Question 9</h3><p>Which of the following could be considered PHI under the HIPAA Privacy Rule?</p><ul><li class="on">Any health information that identifies individual patients, regardless of who maintains the<br>information</li><li>Any health information that identifies individual patients and is maintained by a Covered<br>Entity</li><li>Any health information that is maintained by a Covered Entity, regardless of whether the<br>information identifies individual patients</li><li>Any health information created by an employer and maintained in the employee’s<br>personnel file</li></ul></div><div class="q-fb"><h4 class="bad">Incorrect</h4><p>To learn more, you may want to review <a href="#">HIPAA</a>.</p></div></div></article>
      <svg class="marquee" viewBox="0 0 484 145"><rect x="3" y="3" width="478" height="139" fill="none" stroke="#0078d7" stroke-dasharray="4 3"/><g fill="#fff" stroke="#444"><path d="M.5.5h4v4h-4zM240.500.5h4v4h-4zM478.500.5h4v4h-4zM.5 70.500h4v4h-4zM478.500 70.500h4v4h-4zM.5 139.500h4v4h-4zM240.500 139.500h4v4h-4zM478.500 139.500h4v4h-4z"/></g></svg>
    </div>
  </div>

  <footer class="status">
    <span class="cell"><svg class="i12" viewBox="0 0 12 12"><use href="#i-move"/></svg></span>
    <span class="cell"><svg class="i14" viewBox="0 0 14 14"><path fill="none" stroke="#1f3f6f" stroke-dasharray="2 1" d="M4.500.5h8v8h-8z"/><path fill="none" stroke="#1f3f6f" d="M1.500 9V1M0 2.500l1.500-2 1.500 2M4 12h9M11 10.500l2 1.500-2 1.500"/></svg></span>
    <span class="cell"><svg class="i14" viewBox="0 0 14 14"><path fill="none" stroke="#1f3f6f" d="M4.500.5h8v8h-8zM1.500 9V1M0 2.500l1.500-2 1.500 2M4 12h9M11 10.500l2 1.500-2 1.500"/></svg>7348 × 3460px</span>
    <span class="cell"></span>
    <span class="zoom"><label for="zoom">25%</label><button class="rnd" aria-label="Zoom out"><svg class="i16" viewBox="0 0 16 16"><circle cx="8" cy="8" r="7.400" fill="#f4f4f4" stroke="#777"/><path d="M4 8h8" stroke="#444" stroke-width="1.600"/></svg></button><input id="zoom" type="range" min="0" max="100" value="7"><button class="rnd" aria-label="Zoom in"><svg class="i16" viewBox="0 0 16 16"><circle cx="8" cy="8" r="7.400" fill="#f4f4f4" stroke="#777"/><path d="M4 8h8M8 4v8" stroke="#444" stroke-width="1.600"/></svg></button></span>
  </footer>
  <footer class="taskbar">
    <button class="tb" aria-label="Start"><svg class="i16" viewBox="0 0 16 16"><use href="#i-win"/></svg></button>
    <label class="find"><svg class="i16" viewBox="0 0 16 16"><use href="#i-search"/></svg><input type="text" placeholder="Type here to search" aria-label="Type here to search"></label>
    <button class="tb" aria-label="Cortana"><svg class="i16" viewBox="0 0 16 16"><use href="#i-ring"/></svg></button>
    <button class="tb" aria-label="Task View"><svg class="i16" viewBox="0 0 16 16"><use href="#i-task"/></svg></button>
    <div class="apps">
      <button class="active" aria-label="Edge"><svg class="i24" viewBox="0 0 24 24"><use href="#i-edge"/></svg></button><button aria-label="File Explorer"><svg class="i24" viewBox="0 0 24 24"><use href="#i-folder"/></svg></button><button aria-label="Store"><svg class="i24" viewBox="0 0 24 24"><use href="#i-store"/></svg></button><button class="run" aria-label="VPN"><svg class="i24" viewBox="0 0 24 24"><use href="#i-nord"/></svg></button><button class="run" aria-label="Outlook"><svg class="i24" viewBox="0 0 24 24"><use href="#i-outlook"/></svg></button><button class="run" aria-label="OneNote"><svg class="i24" viewBox="0 0 24 24"><use href="#i-onenote"/></svg></button><button class="run" aria-label="IDE"><svg class="i24" viewBox="0 0 24 24"><use href="#i-ij"/></svg></button><button class="run" aria-label="Paint"><svg class="i24" viewBox="0 0 24 24"><use href="#i-paint"/></svg></button>
    </div>
    <div class="tray">
      <svg class="i16" viewBox="0 0 16 16"><path fill="none" stroke="#fff" stroke-width="1.300" d="m3 10.500 5-5 5 5"/></svg>
      <svg class="i16" viewBox="0 0 16 16"><path fill="none" stroke="#fff" d="M4.500 3.500h11v8h-11zM10 12v3M6 15.500h8M.5 1.500h4v3h-4zM2.500 4.500V12"/></svg>
      <svg class="i16" viewBox="0 0 16 16"><path fill="#aaa" d="M2 12c-3-3 0-6 3-6 2-5 8-3 8 1z"/><path fill="#fff" d="M4 13c-2-3 1-5 3-4 2-3 6-1 6 1 3 0 3 3 1 3z"/></svg>
      <svg class="i16" viewBox="0 0 16 16"><path fill="none" stroke="#fff" d="M6.500 5.500h7v7h-9M13.500 7.500h2v3h-2M1 3.500h4v3H1zM3 7v5h2M2 1.500V3M4 1.500V3"/><path fill="#fff" d="M7 7h5v4H7z"/></svg>
      <div class="clock">9:33 AM<br>4/26/2021</div>
      <svg class="i16" viewBox="0 0 16 16"><path fill="none" stroke="#fff" d="M.5 1.500h15v11h-5L8 15.500l-1.500-3h-6z"/></svg>
    </div>
  </footer>
</section>

<!-- Right monitor: browser window with the course -->
<section class="screen edge">
  <header class="e-title">
    <span class="fav">LRN</span><span>Health Insurance Portability and Accountability Act (HIPAA), HIPAA - Personal - Microsoft Edge</span>
    <span class="ctl"><button aria-label="Minimize"><svg class="i12" viewBox="0 0 12 12"><path d="M1 6h10" stroke="#fff"/></svg></button><button aria-label="Restore"><svg class="i12" viewBox="0 0 12 12"><path fill="none" stroke="#fff" d="M1.500 3.500h7v8h-7zM3.500 3V.5h7v8H9"/></svg></button><button aria-label="Close"><svg class="i12" viewBox="0 0 12 12"><path d="m1 1 10 10M11 1 1 11" stroke="#fff"/></svg></button></span>
  </header>
  <div class="e-url">
    <svg class="i16" viewBox="0 0 16 16"><path fill="none" stroke="#fff" stroke-width="1.300" d="M2.500 6h11v9h-11zM5 6V4c0-4 6-4 6 0v2"/><circle cx="8" cy="10.500" r="1" fill="#fff"/></svg>
    <div class="addr"><b>https:</b>//<b>cognizant-lcec.course.lrn.com</b>/rev2021042502/course/templates/ajax/FluidX/FluidX2.0/app_min/index.html?aicc_sid=64f26abbf4a66c48708d9e04b40e38ab&amp;aicc_url=/app/aicc/track2a&amp;sid=50701&amp;lang=en&amp;cpath=DPP006C/en/DPP006Cm80en/&amp;course...</div>
  </div>
  <div class="c-head">
    <span class="logo">Cognizant</span>
    <nav class="crumb"><a href="#">Health Insurance Portability and Accountability Act (HIPAA)</a><svg class="chev" viewBox="0 0 10 20"><path fill="none" stroke="#0033a0" stroke-width="2.600" d="m1 1 7 9-7 9"/></svg><span>Results and Feedback</span></nav>
    <button class="close" aria-label="Close course"><svg viewBox="0 0 24 24"><path d="m1 1 22 22M23 1 1 23" stroke="#0033a0" stroke-width="3.200"/></svg></button>
  </div>
  <main class="c-body">
    <div class="c-main">
      <h1>Question 10</h1>
      <p>What type of information does the “minimum necessary standard” refer to under the HIPAA<br>Privacy Rule?</p>
      <div class="opts"><button class="on">The amount of PHI to be disclosed</button><button>The number of requirements necessary for privacy</button><button>The age of the patients whose PHI is being released</button><button>The number of privacy rights with which employers must comply</button></div>
      <button class="return">Return to results</button>
    </div>
    <aside class="c-fb"><h2>Correct</h2><p>To learn more, you may want to review <a href="#">HIPAA</a>.</p></aside>
  </main>
  <footer class="c-foot">
    <div class="f-side"><button><svg class="grid-icon" viewBox="0 0 36 32"><path fill="#fff" d="M0 4h10v10H0zM12 4h10v10H12zM24 4h10v10H24zM0 17h10v10H0zM12 17h10v10H12zM24 17h10v10H24z"/></svg>Menu</button></div>
    <div class="f-mid"><div class="prog"><span>20 / 21</span><div class="track"><div class="fill" style="width:95%"></div></div></div><small>© LRN Corporation</small></div>
    <div class="f-side end">
      <button><svg viewBox="0 0 32 32"><g fill="none" stroke="#fff" stroke-width="2.600"><circle cx="16" cy="16" r="14"/><path d="M11 13c0-7 10-6 10-.5 0 4-5 3.500-5 8"/></g><circle cx="16" cy="24" r="1.800" fill="#fff"/></svg>Help</button>
      <button><svg viewBox="0 0 32 32"><path fill="none" stroke="#fff" stroke-width="4" d="M22 3 10 16l12 13"/></svg>Back</button>
      <button><svg viewBox="0 0 32 32"><path fill="none" stroke="#fff" stroke-width="4" d="m10 3 12 13-12 13"/></svg>Next</button>
    </div>
  </footer>
  <footer class="taskbar">
    <button class="tb" aria-label="Start"><svg class="i16" viewBox="0 0 16 16"><use href="#i-win"/></svg></button>
    <button class="tb" aria-label="Search"><svg class="i16" viewBox="0 0 16 16"><use href="#i-search"/></svg></button>
    <button class="tb" aria-label="Cortana"><svg class="i16" viewBox="0 0 16 16"><use href="#i-ring"/></svg></button>
    <button class="tb" aria-label="Task View"><svg class="i16" viewBox="0 0 16 16"><use href="#i-task"/></svg></button>
    <div class="apps">
      <button class="active" aria-label="Edge"><svg class="i24" viewBox="0 0 24 24"><use href="#i-edge"/></svg></button><button aria-label="File Explorer"><svg class="i24" viewBox="0 0 24 24"><use href="#i-folder"/></svg></button><button aria-label="Store"><svg class="i24" viewBox="0 0 24 24"><use href="#i-store"/></svg></button><button class="run" aria-label="VPN"><svg class="i24" viewBox="0 0 24 24"><use href="#i-nord"/></svg></button><button class="run" aria-label="Outlook"><svg class="i24" viewBox="0 0 24 24"><use href="#i-outlook"/></svg></button><button class="run" aria-label="OneNote"><svg class="i24" viewBox="0 0 24 24"><use href="#i-onenote"/></svg></button><button class="run" aria-label="IDE"><svg class="i24" viewBox="0 0 24 24"><use href="#i-ij"/></svg></button><button class="run" aria-label="Paint"><svg class="i24" viewBox="0 0 24 24"><use href="#i-paint"/></svg></button>
    </div>
    <div class="tray"><div class="clock">9:33 AM<br>4/26/2021</div></div>
  </footer>
</section>
</div>
</body>
</html>
```
FILE: styles.css
```css
* { box-sizing: border-box; }
body { margin: 0; font-family: "Open Sans", "Noto Sans", sans-serif; font-size: 11px; color: #333; background: #fff; }
button { font: inherit; color: inherit; background: none; border: 0; padding: 0; margin: 0; }
h1, h2, h3, h4, p, ul { margin: 0; padding: 0; font-weight: 400; list-style: none; }
a { text-decoration: none; color: #1a6fab; }
svg { display: block; flex: none; }
.defs { position: absolute; width: 0; height: 0; }
.i8 { width: 8px; height: 8px; }
.i12 { width: 12px; height: 12px; }
.i14 { width: 14px; height: 14px; }
.i16 { width: 16px; height: 16px; }
.i24 { width: 24px; height: 24px; }
.i32 { width: 32px; height: 32px; }

.screens { display: grid; grid-template-columns: 1fr 1fr; min-height: 100vh; }
.screen { display: flex; flex-direction: column; min-width: 0; }

/* Paint: title bar and tabs */
.p-title { display: flex; align-items: center; height: 23px; gap: 6px; background: #fff; }
.p-title .name { color: #999; font-size: 11px; }
.bar { width: 1px; height: 12px; margin: 0 2px; background: #aaa; }
.ctl { display: flex; align-items: center; margin-left: auto; height: 20px; }
.ctl button { width: 46px; display: flex; justify-content: center; }
.p-tabs { display: flex; height: 24px; border-bottom: 1px solid #dadbdc; }
.p-tabs > button { width: 57px; line-height: 22px; margin-bottom: -1px; }
.p-tabs .file { background: #1979ca; color: #fff; }
.p-tabs .on { background: #f5f6f7; border: 1px solid #dadbdc; border-bottom: 0; }
.tabs-end { display: flex; align-items: center; gap: 10px; margin-left: auto; padding-right: 3px; }
.help { width: 16px; height: 16px; border-radius: 50%; background: #1270c4; color: #fff; font-weight: 700; line-height: 16px; }

/* Paint: ribbon */
.ribbon { display: flex; height: 92px; padding: 2px 0; background: #f5f6f7; border-bottom: 1px solid #dadbdc; }
.grp { display: flex; flex-direction: column; border-right: 1px solid #e2e3e4; }
.grp h2 { margin-top: auto; font-size: 11px; line-height: 14px; color: #5a5a5a; text-align: center; }
.row { display: flex; padding-top: 2px; }
.g-clip { width: 107px; }
.g-image { width: 122px; }
.g-tools { width: 80px; }
.g-brush { width: 56px; }
.g-shapes { width: 246px; }
.g-size { width: 53px; }
.g-colors { width: 357px; }
.g-3d { width: 62px; }
.big { display: flex; flex-direction: column; align-items: center; width: 42px; height: 66px; padding-top: 3px; line-height: 13px; }
.big span { padding-top: 4px; white-space: nowrap; text-align: center; }
.sel { background: #c9e0f7; border: 1px solid #62a2e4; }
.dd { display: block; border: 3px solid transparent; border-top-color: #333; border-bottom: 0; }
.big .dd { margin-top: 4px; }
.stack { display: flex; flex-direction: column; padding: 0 0 0 5px; }
.stack button { display: flex; align-items: center; gap: 4px; height: 22px; white-space: nowrap; }
.off { color: #8f8f8f; }
.off .dd { border-top-color: #aaa; }
.g-clip .big { margin-left: 6px; }
.g-clip .stack { padding-left: 3px; }
.g-image .big { margin-left: 4px; }
.g-brush .big, .g-size .big { margin: 0 6px; }
.g-3d .big { margin: 0 9px; }
.g-image .row > .sel { padding-top: 2px; }
.tools { display: grid; grid-template-columns: 24px 24px 24px; grid-auto-rows: 28px; row-gap: 0; padding: 8px 0 0 4px; }
.tools button { display: grid; place-items: center; }
.letter { font: 700 18px "Liberation Serif", serif; color: #1f3f6a; }
.gallery { display: flex; height: 60px; margin: 2px 6px 0 5px; border: 1px solid #ccd0d4; background: #fbfcfd; }
.shapes { display: grid; grid-template-columns: repeat(7, 20px); grid-auto-rows: 19px; padding-left: 1px; }
.shapes button { display: grid; place-items: center; }
.shapes svg { width: 16px; height: 16px; fill: none; stroke: #2a689f; stroke-width: 1.200; }
.gal-scroll { display: flex; flex-direction: column; justify-content: space-around; align-items: center; width: 14px; border-left: 1px solid #dde; background: #f5f6f7; }
.gal-scroll .up { border-top: 0; border-bottom: 3px solid #aaa; }
.gal-scroll .more { box-shadow: 0 -2px 0 #555; }
.g-shapes .stack { padding-left: 0; }
.col { width: 42px; height: 66px; line-height: 13px; padding-top: 3px; }
.well { display: block; margin: 0 auto; border: 1px solid #7f7f7f; }
.black { width: 31px; height: 31px; margin-bottom: 4px; background: #000; box-shadow: inset 0 0 0 1px #d8e8f8; }
.white { width: 24px; height: 24px; margin-top: 5px; margin-bottom: 7px; background: #fff; }
.g-colors .col:first-child { margin-left: 4px; }
.palette { display: grid; grid-template-columns: repeat(10, 20px); grid-auto-rows: 20px; gap: 2px; margin: 1px 2px 0 1px; }
.palette button { border: 1px solid #a0a0a0; box-shadow: inset 0 0 0 1px #fff; }
.palette .none { box-shadow: none; background: #f5f6f7; }

/* Paint: canvas */
.workspace { flex: 1; display: flex; padding: 5px 78px 6px 5px; background: linear-gradient(#c6cfe0, #dce6f3); }
.canvas { position: relative; flex: 1; overflow: hidden; background: #fff; box-shadow: 4px 4px 5px #b2bed2; font-family: Inter, Roboto, sans-serif; font-size: 5px; line-height: 7px; }
.quiz { position: absolute; width: 476px; }
.quiz::before { content: ""; display: block; height: 4px; border-bottom: 1px solid #e2e2e2; background: linear-gradient(90deg, #fff 10%, #fafafa 20%); }
.q1 { left: 977px; top: 0; }
.q2 { left: 984px; top: 109px; }
.q3 { left: 986px; top: 217px; }
.q4 { left: 989px; top: 324px; }
.q5 { left: 992px; top: 418px; }
.q6 { left: 998px; top: 533px; }
.q7 { left: 1005px; top: 645px; }
.q8 { left: 486px; top: 430px; }
.q9 { left: 492px; top: 547px; }
.q-body { display: grid; grid-template-columns: 224px 228px; gap: 14px; align-items: start; padding: 2px 0 0 4px; white-space: nowrap; }
.q-main h3 { padding-top: 4px; font: 10px/13px Roboto, sans-serif; color: #222; }
.q-main p { padding: 5px 0; color: #333; }
.q-main ul { display: grid; gap: 2px; }
.q-main li { padding: 4px; border-radius: 1px; background: #e6e6e6; box-shadow: inset 0 -1px 0 #dcdcdc; color: #222; }
.q-main .on { background: #494949; box-shadow: inset 0 -1px 0 #3c3c3c; color: #fff; }
.q-main .cut { height: 12px; }
.q-fb { height: 33px; padding: 7px 5px; border: 1px solid #e2e2e2; border-radius: 1px; color: #111; }
.q-fb h4 { font: 700 7px/8px Roboto, sans-serif; color: #0a7d0a; padding-bottom: 5px; }
.q-fb .bad { color: #a00000; }
.marquee { position: absolute; left: 488px; top: 544px; width: 484px; height: 145px; }

/* Pasted full-desktop capture */
.shot { position: absolute; left: 0; top: 0; display: flex; width: 960px; height: 270px; }
.shot-paint { width: 480px; height: 270px; }
.t3 { font-family: "Open Sans", sans-serif; font-size: 3px; fill: #333; }
.t4 { font-family: "Open Sans", sans-serif; font-size: 4px; fill: #333; }
.dim { fill: #999; }
.inv { fill: #fff; }
.soft { fill: #b4bccc; }
.brand { fill: #0033a0; font-weight: 700; }
.shot-edge { display: flex; flex-direction: column; width: 480px; background: #fff; }
.s-title { display: flex; justify-content: space-between; height: 6px; padding: 0 3px 0 6px; background: #0d0828; color: #fff; font: 3px/6px "Open Sans", sans-serif; }
.s-url { height: 8px; padding-left: 11px; background: #0e0e0e; color: #8a8a8a; font: 4px/7px Roboto, sans-serif; white-space: nowrap; }
.s-url b { color: #fff; font-weight: 400; }
.s-head { display: flex; align-items: center; height: 21px; padding: 0 3px 0 5px; border-bottom: 1px solid #e2e2e2; background: linear-gradient(90deg, #fff 11%, #fafafa 13%); }
.s-logo { color: #0033a0; font: 700 7px/8px Lato, sans-serif; }
.s-crumb { margin-left: auto; color: #777; font-size: 5px; }
.s-crumb b { color: #0033a0; }
.s-crumb em { font-style: normal; color: #222; }
.s-x { width: 6px; height: 6px; margin-left: 4px; }
.roomy { padding: 4px 0 0 8px; }
.roomy .q-main h3 { padding-top: 3px; }
.s-return { display: block; width: 48px; margin: 6px -1px 0 auto; padding: 2px 0; border-radius: 1px; background: #3a3a3a; color: #fff; font-weight: 700; text-align: center; }
.s-foot { width: 480px; height: 26px; margin-top: auto; }

/* Paint: status bar */
.status { display: flex; height: 26px; background: #f0f0f0; border-top: 1px solid #dcdcdc; color: #222; }
.cell { display: flex; align-items: center; gap: 6px; width: 156px; padding-left: 5px; margin: 1px 0; border-right: 1px solid #dadada; }
.zoom { display: flex; align-items: center; gap: 8px; margin: 1px 0 1px auto; padding: 0 4px 0 27px; border-left: 1px solid #dadada; }
.zoom input { appearance: none; width: 86px; height: 18px; margin: 0 3px; background: linear-gradient(#ddd, #ddd) center / 100% 4px no-repeat; }
.zoom input::-webkit-slider-thumb { appearance: none; width: 10px; height: 17px; background: #0078d7; clip-path: polygon(0 0, 100% 0, 100% 75%, 50% 100%, 0 75%); }

/* Taskbars */
.taskbar { display: flex; height: 40px; background: #22201f; color: #fff; }
.edge .taskbar { background: #222423; }
.tb { display: grid; place-items: center; width: 48px; }
.find { display: flex; align-items: center; gap: 10px; width: 344px; padding-left: 12px; background: #333; border: 1px solid #4e4e4e; }
.find input { flex: 1; min-width: 0; border: 0; outline: 0; padding: 0; background: none; font: 14px "Open Sans", sans-serif; color: #fff; }
.find input::placeholder { color: #c8c8c8; opacity: 1; }
.apps { display: flex; margin-left: 2px; }
.apps button { display: grid; place-items: center; width: 49px; background: linear-gradient(#76d9f5, #76d9f5) center bottom / 0 2px no-repeat; }
.apps .run { background-size: 40px 2px; }
.apps .active { background-size: 100% 2px; background-color: #4d4a49; }
.tray { display: flex; align-items: center; gap: 8px; margin-left: auto; padding-right: 24px; }
.edge .tray { padding-right: 7px; }
.clock { font-size: 11px; line-height: 18px; text-align: center; }
.clock + svg { margin-left: 9px; }

/* Browser chrome */
.e-title { display: flex; align-items: center; gap: 5px; height: 24px; padding-left: 1px; background: linear-gradient(90deg, #050420, #1a0a34 35%, #1c082c 55%, #0a0726 75%, #190a33 90%, #080620); border-bottom: 1px solid #333; color: #fff; font-size: 11px; white-space: nowrap; }
.fav { width: 17px; height: 16px; background: #fff; color: #0a3f8a; font: 700 7px/16px Roboto, sans-serif; text-align: center; }
.e-url { display: flex; align-items: center; gap: 14px; height: 30px; padding-left: 14px; background: #0e0e0e; border-bottom: 1px solid #2a2a2a; color: #8a8a8a; font-size: 15px; white-space: nowrap; overflow: hidden; }
.e-url b { color: #fff; font-weight: 400; }

/* Course page */
.c-head, .c-body, .c-foot { font-family: Roboto, sans-serif; }
.c-head { display: flex; align-items: center; height: 87px; padding: 4px 16px 0 20px; background: linear-gradient(90deg, #fff 11%, #fafafa 13%); box-shadow: 0 1px 4px rgba(0, 0, 0, .25); }
.logo { color: #0033a0; font: 700 27px/32px Lato, sans-serif; padding-bottom: 10px; }
.crumb { display: flex; align-items: center; gap: 12px; margin-left: auto; font-size: 21px; color: #222; white-space: nowrap; }
.crumb a { color: #777; }
.chev { width: 10px; height: 20px; }
.close { margin-left: 14px; }
.close svg { width: 24px; height: 24px; }
.c-body { flex: 1; display: grid; grid-template-columns: 894fr 909fr; gap: 59px; align-items: start; padding: 15px 28px 0 30px; font-size: 21px; line-height: 29px; color: #333; }
.c-main { display: flex; flex-direction: column; }
.c-main h1 { padding-top: 17px; font-size: 40px; line-height: 48px; }
.c-main p { padding: 22px 0 19px; white-space: nowrap; }
.opts { display: grid; gap: 10px; }
.opts button { height: 58px; padding: 0 16px; border-radius: 6px; background: #e6e6e6; box-shadow: 1px 2px 2px #ccc; text-align: left; }
.opts .on { background: #494949; color: #fff; }
.return { align-self: flex-end; height: 43px; margin: 25px -9px 0 0; padding: 0 16px; border-radius: 6px; background: linear-gradient(#4c4c4c, #2f2f2f); color: #fff; font-size: 21px; font-weight: 700; }
.c-fb { padding: 27px 20px 19px; border: 1px solid #aaa; border-radius: 6px; color: #111; }
.c-fb h2 { font-size: 28px; font-weight: 500; line-height: 32px; color: #0a7d0a; padding-bottom: 21px; }
.c-foot { display: grid; grid-template-columns: 1fr auto 1fr; height: 65px; padding: 8px 11px 0; background: #0033a0; color: #fff; font-size: 13px; line-height: 16px; }
.f-side { display: flex; gap: 28px; }
.end { justify-content: flex-end; }
.f-side button { display: flex; flex-direction: column; align-items: center; gap: 6px; height: 54px; }
.f-side svg { width: 32px; height: 32px; }
.f-side .grid-icon { width: 36px; }
.f-mid { text-align: center; padding-top: 10px; }
.prog { display: flex; align-items: center; gap: 8px; }
.track { width: 254px; height: 10px; border-radius: 5px; overflow: hidden; background: #2f6bff; }
.fill { height: 10px; background: linear-gradient(#fff 70%, #ddd); }
.f-mid small { display: block; padding-top: 3px; font-size: 12px; color: #93a8da; }
```
